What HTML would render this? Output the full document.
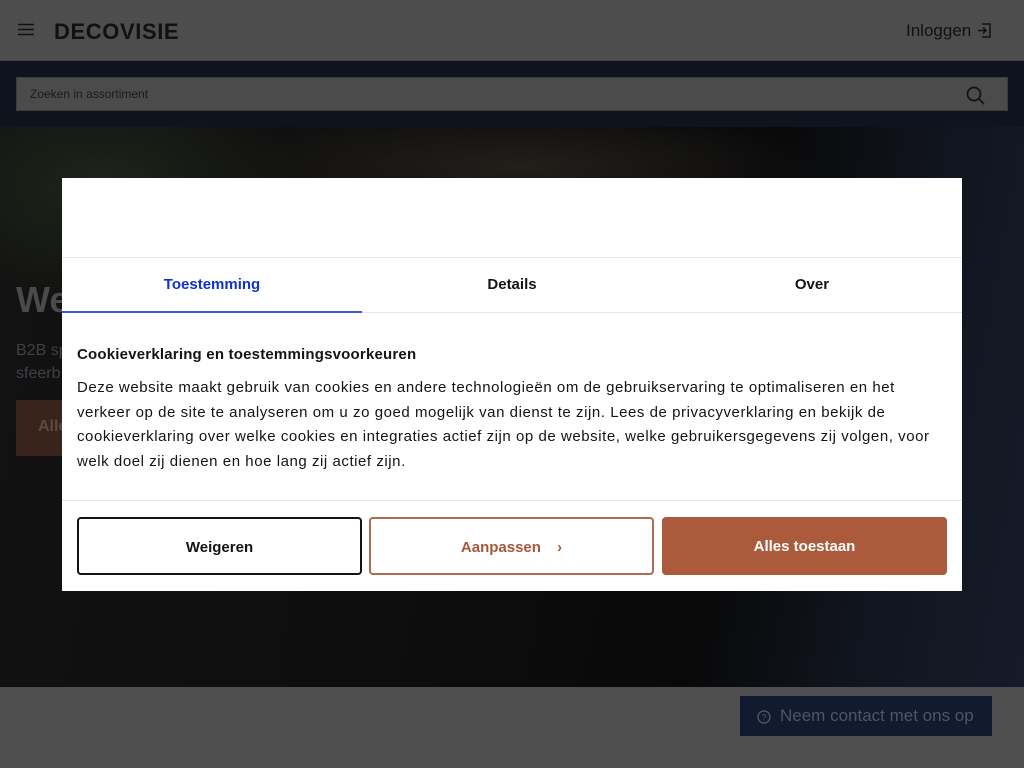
<!DOCTYPE html>
<html><head><meta charset="utf-8"><style>
*{margin:0;padding:0;box-sizing:border-box}
body{width:1024px;height:768px;overflow:hidden;font-family:"Liberation Sans",Arial,sans-serif;background:#4d4d4d;position:relative}
.hdr{position:absolute;left:0;top:0;width:1024px;height:61px;background:#4d4d4d;border-bottom:1px solid #444}
.band{position:absolute;left:0;top:61px;width:1024px;height:66px;background:#0f131d}
.search{position:absolute;left:16px;top:77px;width:992px;height:34px;background:#4b4b4b;border:1px solid #3a3a3a;font-size:12px;color:#1b1b1b;padding:9px 13px}
.hero{position:absolute;left:0;top:127px;width:1024px;height:560px;background:
radial-gradient(ellipse 200px 120px at 100px 60px,#1f2419,transparent),
radial-gradient(ellipse 300px 60px at 520px 40px,#221f1a,transparent),
linear-gradient(100deg,#121212 0%,#0e0e0e 40%,#09090a 70%,#11151f 85%,#151b2a 100%)}
.bottom{position:absolute;left:0;top:687px;width:1024px;height:81px;background:#4e4e4e}
.contact{position:absolute;left:740px;top:696px;width:252px;height:40px;background:#111a2e;color:#4e5566;font-size:17px;padding:10px 0 0 40px}
.modal{position:absolute;left:62px;top:178px;width:900px;height:413px;background:#fff}
.tabs{position:absolute;top:79px;left:0;width:900px;height:56px;border-top:1px solid #e6e6e6;border-bottom:1px solid #e6e6e6}
.tab{position:absolute;top:0;width:300px;height:55px;text-align:center;font-weight:bold;font-size:15px;padding-top:18px;color:#141414}
.tab.a{color:#1032cf;border-bottom:2px solid #3b5be0}
.body{position:absolute;top:168px;left:15px;width:875px}
h2{font-size:15px;color:#141414;margin-bottom:13px;letter-spacing:0.2px}
p{font-size:15px;line-height:24.5px;color:#141414;letter-spacing:0.55px}
.foot{position:absolute;top:322px;left:0;width:900px;border-top:1px solid #e6e6e6}
.btn{position:absolute;top:339px;height:58px;width:285px;border-radius:4px;font-weight:bold;font-size:15px;text-align:center;padding-top:20px}
</style></head><body>
<div class="hdr">
<svg style="position:absolute;left:18px;top:23px" width="16" height="13"><path d="M0 1.5H16M0 6.5H16M0 11.5H16" stroke="#111" stroke-width="1.6"/></svg>
<div style="position:absolute;left:54px;top:19px;font-size:22px;font-weight:bold;letter-spacing:0.6px;color:#111">DECOVISIE</div>
<div style="position:absolute;left:906px;top:21px;font-size:17px;color:#111">Inloggen</div>
<svg style="position:absolute;left:977px;top:23px" width="14" height="15"><path d="M5 1H13V14H5M1 7.5H9M6 4.5L9 7.5 6 10.5" fill="none" stroke="#111" stroke-width="1.5"/></svg>
</div>
<div class="band"></div>
<div class="search">Zoeken in assortiment
<svg style="position:absolute;right:22px;top:8px" width="19" height="19"><circle cx="8" cy="8" r="6.5" fill="none" stroke="#111" stroke-width="1.7"/><path d="M12.7 12.7L18 18" stroke="#111" stroke-width="1.7"/></svg></div>
<div class="hero">
<div style="position:absolute;left:16px;top:152px;font-size:36px;font-weight:bold;color:#4a4a4a">We</div>
<div style="position:absolute;left:16px;top:212px;font-size:16px;line-height:23px;color:#3f4048">B2B sp<br>sfeerb</div>
<div style="position:absolute;left:16px;top:273px;width:60px;height:56px;background:#3a231a;color:#5a4a44;font-size:16px;font-weight:bold;padding:18px 0 0 22px">Alle</div>
</div>
<div class="bottom"></div>
<div class="contact"><svg style="position:absolute;left:17px;top:14px" width="14" height="14"><circle cx="7" cy="7" r="6" fill="none" stroke="#4e5566" stroke-width="1.4"/><text x="7" y="10.5" font-size="9" text-anchor="middle" fill="#4e5566" font-family="Liberation Sans">?</text></svg>Neem contact met ons op</div>
<div class="modal">
<div class="tabs"><div class="tab a" style="left:0">Toestemming</div><div class="tab" style="left:300px">Details</div><div class="tab" style="left:600px">Over</div></div>
<div class="body"><h2>Cookieverklaring en toestemmingsvoorkeuren</h2>
<p>Deze website maakt gebruik van cookies en andere technologieën om de gebruikservaring te optimaliseren en het verkeer op de site te analyseren om u zo goed mogelijk van dienst te zijn. Lees de privacyverklaring en bekijk de cookieverklaring over welke cookies en integraties actief zijn op de website, welke gebruikersgegevens zij volgen, voor welk doel zij dienen en hoe lang zij actief zijn.</p></div>
<div class="foot"></div>
<div class="btn" style="left:15px;border:2px solid #141414;color:#141414">Weigeren</div>
<div class="btn" style="left:307px;border:2px solid #b06a4f;color:#a9573a">Aanpassen <span style="display:inline-block;margin-left:12px">&#x203A;</span></div>
<div class="btn" style="left:600px;background:#ab5b3c;color:#fff;padding-top:21px">Alles toestaan</div>
</div>
</body></html>
